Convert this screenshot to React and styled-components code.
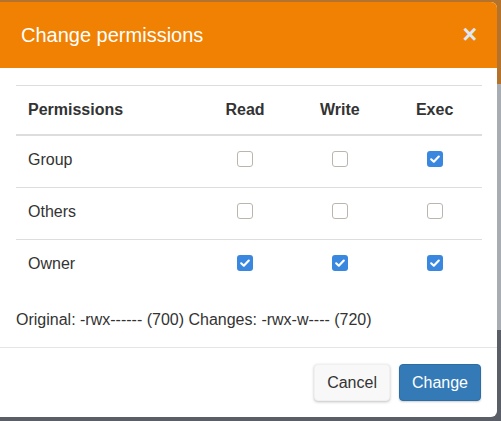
import React from "react";
import styled, { createGlobalStyle } from "styled-components";

const GlobalStyle = createGlobalStyle`
  html, body {
    margin: 0;
    padding: 0;
  }
  body {
    font-family: "Liberation Sans", Arial, sans-serif;
    color: #333;
    background: linear-gradient(
      to bottom,
      #b4732c 0px,
      #b4732c 84px,
      #a8acb3 84px,
      #a8acb3 330px,
      #5a5e66 330px
    );
    min-height: 421px;
  }
`;

const Backdrop = styled.div`
  padding-top: 2px;
  width: 501px;
  height: 421px;
  box-sizing: border-box;
  overflow: hidden;
`;

const Modal = styled.div`
  width: 497px;
  background: #fff;
  border-radius: 0 6px 6px 0;
  overflow: hidden;
`;

const Header = styled.div`
  display: flex;
  align-items: center;
  justify-content: space-between;
  height: 66px;
  padding: 0 20px 0 21px;
  box-sizing: border-box;
  background: #f08103;
`;

const Title = styled.h4`
  margin: 0;
  font-size: 20px;
  font-weight: normal;
  color: #fff;
`;

const Close = styled.span`
  font-size: 25px;
  font-weight: bold;
  line-height: 1;
  color: #dce8f2;
  margin-top: -2px;
`;

const Body = styled.div`
  padding: 17px 15px 0 16px;
`;

const Table = styled.table`
  width: 466px;
  border-collapse: collapse;
  border-top: 1px solid #ddd;
  font-size: 16px;
`;

const HeadCell = styled.th`
  height: 48px;
  padding: 0 12px;
  border-bottom: 2px solid #ddd;
  font-weight: bold;
  text-align: ${(p) => (p.$first ? "left" : "center")};
  width: ${(p) => (p.$first ? "158px" : "71px")};
  color: #333;
`;

const Row = styled.tr`
  border-bottom: ${(p) => (p.$last ? "none" : "1px solid #ddd")};
`;

const Cell = styled.td`
  height: 47px;
  padding: 0 12px 4px;
  text-align: ${(p) => (p.$first ? "left" : "center")};
  vertical-align: middle;
`;

const Box = styled.span`
  display: inline-flex;
  align-items: center;
  justify-content: center;
  width: 16px;
  height: 16px;
  box-sizing: border-box;
  border-radius: 3px;
  vertical-align: middle;
  margin-top: -3px;
  border: ${(p) => (p.$checked ? "none" : "1px solid #bcb5ae")};
  background: ${(p) => (p.$checked ? "#3a87e0" : "#fff")};
`;

const Summary = styled.p`
  margin: 18px 0 16px;
  font-size: 16px;
  line-height: 22px;
  color: #333;
`;

const Footer = styled.div`
  display: flex;
  justify-content: flex-end;
  gap: 9px;
  padding: 16px 16px 16px;
  border-top: 1px solid #e5e5e5;
`;

const Button = styled.button`
  height: 37px;
  padding: 0 12px;
  font-family: "Liberation Sans", Arial, sans-serif;
  font-size: 16px;
  border-radius: 4px;
  cursor: pointer;
  border: 1px solid ${(p) => (p.$primary ? "#2e6da4" : "#f0f0f0")};
  background: ${(p) => (p.$primary ? "#337ab7" : "#f8f8f8")};
  color: ${(p) => (p.$primary ? "#fff" : "#333")};
  box-shadow: ${(p) =>
    p.$primary ? "0 1px 2px rgba(0,0,0,0.2)" : "0 1px 3px rgba(0,0,0,0.25)"};
`;

function Check({ checked }) {
  return (
    <Box $checked={checked}>
      {checked && (
        <svg width="12" height="12" viewBox="0 0 12 12">
          <path
            d="M2.2 6.3 L4.8 8.7 L9.8 3.6"
            fill="none"
            stroke="#fff"
            strokeWidth="2.2"
            strokeLinecap="round"
            strokeLinejoin="round"
          />
        </svg>
      )}
    </Box>
  );
}

const rows = [
  { name: "Group", perms: [false, false, true] },
  { name: "Others", perms: [false, false, false] },
  { name: "Owner", perms: [true, true, true] },
];

export default function App() {
  return (
    <>
      <GlobalStyle />
      <Backdrop>
        <Modal>
          <Header>
            <Title>Change permissions</Title>
            <Close>×</Close>
          </Header>
          <Body>
            <Table>
              <thead>
                <tr>
                  <HeadCell $first>Permissions</HeadCell>
                  <HeadCell>Read</HeadCell>
                  <HeadCell>Write</HeadCell>
                  <HeadCell>Exec</HeadCell>
                </tr>
              </thead>
              <tbody>
                {rows.map((r, i) => (
                  <Row key={r.name} $last={i === rows.length - 1}>
                    <Cell $first>{r.name}</Cell>
                    {r.perms.map((c, j) => (
                      <Cell key={j}>
                        <Check checked={c} />
                      </Cell>
                    ))}
                  </Row>
                ))}
              </tbody>
            </Table>
            <Summary>
              Original: -rwx------ (700) Changes: -rwx-w---- (720)
            </Summary>
          </Body>
          <Footer>
            <Button>Cancel</Button>
            <Button $primary>Change</Button>
          </Footer>
        </Modal>
      </Backdrop>
    </>
  );
}
